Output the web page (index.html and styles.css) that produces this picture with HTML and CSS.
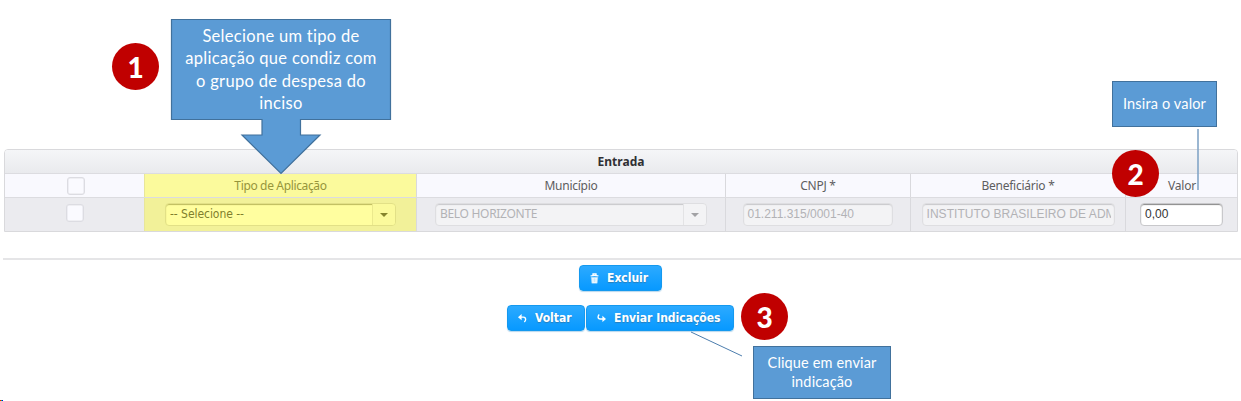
FILE: index.html
```html
<!DOCTYPE html>
<html lang="pt-BR">
<head>
<meta charset="utf-8">
<title>Entrada</title>
<link rel="stylesheet" href="styles.css">
</head>
<body>
<main class="page">
  <section class="panel">
    <h1 class="panel-title">Entrada</h1>
    <div class="grid head">
      <div class="cell"><span class="check head-check"></span></div>
      <div class="cell marked">Tipo de Aplicação</div>
      <div class="cell">Município</div>
      <div class="cell">CNPJ *</div>
      <div class="cell">Beneficiário *</div>
      <div class="cell last">Valor</div>
    </div>
    <div class="grid row">
      <div class="cell"><span class="check"></span></div>
      <div class="cell marked"><div class="select tipo"><span class="value">-- Selecione --</span><span class="drop"><i class="caret"></i></span></div></div>
      <div class="cell"><div class="select municipio"><span class="value">BELO HORIZONTE</span><span class="drop"><i class="caret"></i></span></div></div>
      <div class="cell"><div class="field cnpj">01.211.315/0001-40</div></div>
      <div class="cell"><div class="field beneficiario"><div class="clip">INSTITUTO BRASILEIRO DE ADM</div></div></div>
      <div class="cell"><div class="field valor">0,00</div></div>
    </div>
  </section>
  <hr class="rule">
  <div class="actions first">
    <button class="btn excluir"><svg class="icon" viewBox="0 0 10 12"><path d="M.6 3.200Q5 1.800 9.400 3.200M3.300 2V.9h3.400V2" fill="none" stroke="#fff" stroke-width="1.400"/><path d="M1.300 4.500h7.400L8 11.200H2zM3.400 5.800v4M5 5.800v4M6.600 5.800v4" fill="#fff" stroke="#8fd0fc" stroke-width=".6"/></svg><span>Excluir</span></button>
  </div>
  <div class="actions second">
    <button class="btn voltar"><svg class="icon" viewBox="0 0 10 12"><path d="M2 4.500H6Q8.500 4.500 8.500 7 8.500 8.500 7 9.800" fill="none" stroke="#fff" stroke-width="1.500"/><path d="M0 4.500 4 1V8z" fill="#fff"/></svg><span>Voltar</span></button>
    <button class="btn enviar"><svg class="icon" viewBox="0 0 10 12"><path d="M2.500 1.500Q1.200 3 1.200 4.200 1.200 6.500 3.700 6.500H8" fill="none" stroke="#fff" stroke-width="1.500"/><path d="M10 6.500 6 3V10z" fill="#fff"/></svg><span>Enviar Indicações</span></button>
  </div>
</main>
<svg class="overlay" viewBox="0 0 1241 401">
  <path class="arrow" d="M171.500 19.500H390.500V119.500H300.500V135H320L281 173.500 242 135H262V119.500H171.500z"/>
  <path class="leader" d="M1198 129V190"/>
  <path class="leader thin" d="M691 332 742 356"/>
</svg>
<div class="note note-tipo"><span>Selecione um tipo de</span><span>aplicação que condiz com</span><span>o grupo de despesa do</span><span>inciso</span></div>
<div class="note boxed note-valor">Insira o valor</div>
<div class="note boxed note-enviar"><span>Clique em enviar</span><span>indicação</span></div>
<div class="step step-1">1</div>
<div class="step step-2">2</div>
<div class="step step-3">3</div>
<div class="pixels"></div>
</body>
</html>
```
FILE: styles.css
```css
* { box-sizing: border-box; }
body { margin: 0; width: 1241px; height: 401px; background: #fff; position: relative; overflow: hidden; font: 12px "Noto Sans", sans-serif; }
.page { padding-top: 149px; }
.panel { width: 1234px; margin-left: 4px; height: 83px; border: 1px solid #d9d9dc; border-radius: 4px 4px 0 0; overflow: hidden; }
.panel-title { margin: 0; height: 23px; text-align: center; font: bold 12px/23px "Noto Sans", sans-serif; color: #303034; background: linear-gradient(#f5f6f8, #e9eaed); }
.grid { display: grid; grid-template-columns: 139px 272px 309px 185px 215px 1fr; border-top: 1px solid #dcdce0; }
.cell { display: flex; align-items: center; justify-content: center; border-left: 1px solid #d9d9dd; }
.cell:first-child { border-left: 0; }
.head { height: 24px; background: #f9f9fe; color: #5e5e60; letter-spacing: -.25px; }
.row { height: 34px; background: #ebebef; }
.head .marked { background: #fbfa9c; color: #96953b; letter-spacing: -.35px; }
.row .marked { background: #f2f199; }
.head .last { padding-left: 1px; }
.marked { border-left-color: #e8e69a; }
.check { width: 18px; height: 18px; border: 1px solid #dcdce2; border-radius: 3px; background: #fafaff; box-shadow: inset 0 0 0 .5px #e3e3e8; }
.head-check { margin-left: 2px; }
.row .check { margin: -3px 0 0 0; }
.select, .field { height: 23px; border: 1px solid #dedee1; border-radius: 4px; background: #f3f3f5; color: #b2b2b5; box-shadow: inset 0 1px 1px #c8c8cb; white-space: nowrap; overflow: hidden; line-height: 20px; }
.select { display: flex; }
.value { flex: 1; padding-left: 4px; }
.drop { width: 23px; display: flex; align-items: center; justify-content: center; border-left: 1px solid #e3e3e5; background: #f3f3f5; }
.caret { border: 4px solid transparent; border-top: 4px solid #a2a2a5; border-bottom: 0; }
.tipo { width: 231px; background: #fffe9f; border-color: #e2e087; color: #7f7e2d; box-shadow: inset 0 1px 1px #bdbb5e; }
.tipo .drop { background: #fbfa9c; border-color: #ebe98d; }
.tipo .caret { border-top-color: #85842d; }
.tipo .value { font-family: "DejaVu Sans Condensed", "DejaVu Sans", sans-serif; font-stretch: condensed; font-size: 12px; letter-spacing: -.05px; }
.municipio { width: 272px; letter-spacing: -.3px; }
.field { padding: 0 4px; font-family: "Liberation Sans", sans-serif; }
.cnpj { width: 150px; margin-right: 1px; }
.beneficiario { width: 193px; }
.clip { overflow: hidden; width: 184px; letter-spacing: .05px; }
.valor { width: 83px; background: #fff; border-color: #c8c8cb; color: #333; box-shadow: inset 0 1px 1px #888; }
.rule { width: 1238px; height: 2px; border: 0; background: #e5e5e7; margin: 26px 0 0 3px; }
.actions { display: flex; gap: 1px; }
.first { margin: 5px 0 0 579px; }
.second { margin: 14px 0 0 507px; }
.btn { height: 26px; display: flex; align-items: center; gap: 8px; padding: 0 0 0 10px; color: #fff; font: bold 12px "DejaVu Sans Condensed", "DejaVu Sans", sans-serif; font-stretch: condensed; white-space: nowrap; border: 1px solid #1499ef; border-radius: 4px; background: linear-gradient(#2caaff, #0799ff); box-shadow: 0 1px 1px #b9d8ed; text-shadow: 0 1px 1px #287eba; }
.icon { width: 9px; height: 11px; flex: none; }
.excluir { width: 83px; }
.voltar { width: 78px; }
.enviar { width: 148px; }
.overlay { position: absolute; inset: 0; width: 1241px; height: 401px; }
.arrow { fill: #5b9bd5; stroke: #41719c; stroke-width: 1.2; }
.leader { fill: none; stroke: #82a5c7; stroke-width: 1.6; }
.thin { stroke: #4d7eae; stroke-width: 1; }
.note { position: absolute; display: flex; flex-direction: column; align-items: center; justify-content: center; color: #fff; font-family: Lato, sans-serif; white-space: nowrap; font-variant-ligatures: none; }
.note-tipo { left: 172px; top: 20px; width: 218px; height: 99px; font-size: 16.5px; line-height: 22.3px; letter-spacing: .3px; }
.boxed { background: #5b9bd5; border: 1px solid #41719c; }
.note-valor { left: 1112px; top: 81px; width: 105px; height: 46px; font-size: 14.5px; letter-spacing: .15px; padding-bottom: 2px; }
.note-enviar { left: 753px; top: 346px; width: 138px; height: 53px; font-size: 14.5px; line-height: 19px; letter-spacing: .15px; padding-bottom: 1px; }
.step { position: absolute; width: 47px; height: 47px; border-radius: 50%; background: #c00000; color: #fff; display: flex; align-items: center; justify-content: center; font: 900 28px Lato, sans-serif; }
.step-1 { left: 112px; top: 43px; }
.step-2 { left: 1112px; top: 150px; }
.step-3 { left: 741px; top: 293px; }
.pixels { position: absolute; left: 0; top: 400px; width: 3px; height: 1px; background: linear-gradient(90deg, #f00 1px, #0c4 1px 2px, #00f 2px); }
```
